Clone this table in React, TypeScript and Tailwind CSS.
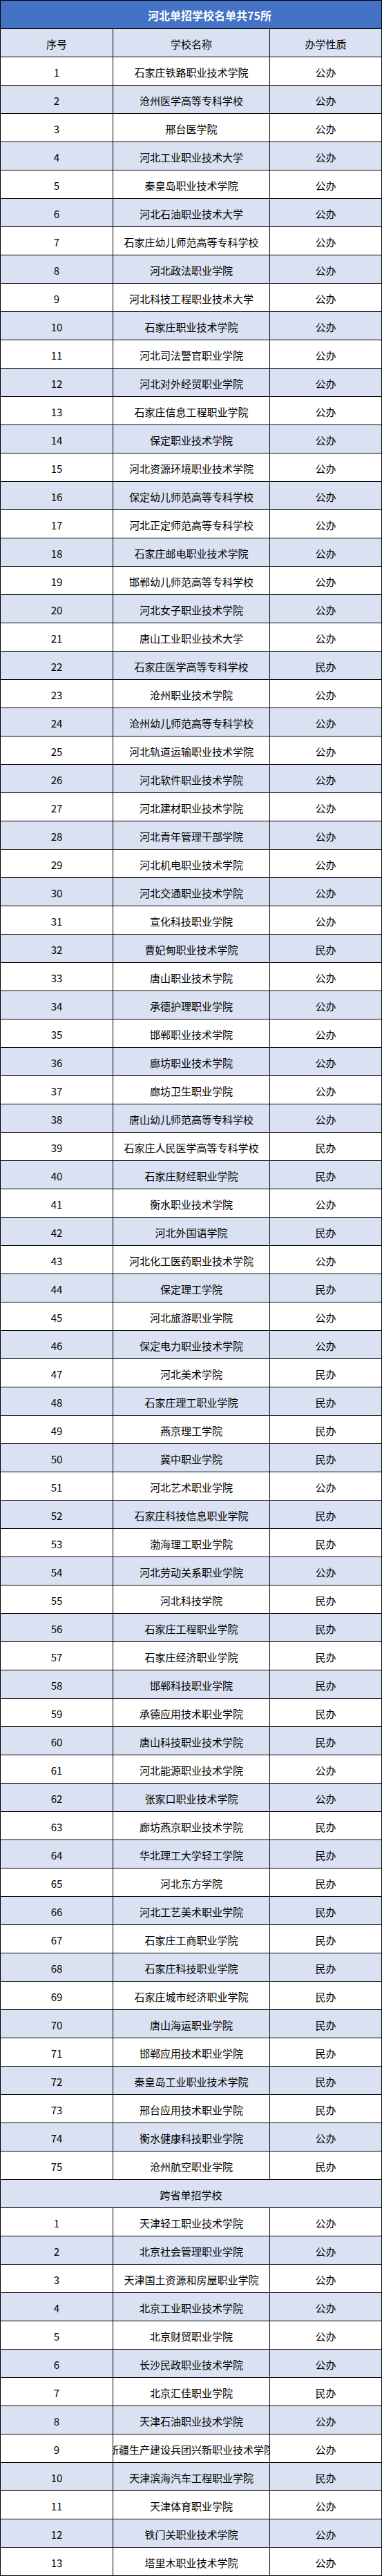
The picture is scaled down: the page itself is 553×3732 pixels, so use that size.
import React from "react";

const hebei: [string, string][] = [
  ["石家庄铁路职业技术学院", "公办"],
  ["沧州医学高等专科学校", "公办"],
  ["邢台医学院", "公办"],
  ["河北工业职业技术大学", "公办"],
  ["秦皇岛职业技术学院", "公办"],
  ["河北石油职业技术大学", "公办"],
  ["石家庄幼儿师范高等专科学校", "公办"],
  ["河北政法职业学院", "公办"],
  ["河北科技工程职业技术大学", "公办"],
  ["石家庄职业技术学院", "公办"],
  ["河北司法警官职业学院", "公办"],
  ["河北对外经贸职业学院", "公办"],
  ["石家庄信息工程职业学院", "公办"],
  ["保定职业技术学院", "公办"],
  ["河北资源环境职业技术学院", "公办"],
  ["保定幼儿师范高等专科学校", "公办"],
  ["河北正定师范高等专科学校", "公办"],
  ["石家庄邮电职业技术学院", "公办"],
  ["邯郸幼儿师范高等专科学校", "公办"],
  ["河北女子职业技术学院", "公办"],
  ["唐山工业职业技术大学", "公办"],
  ["石家庄医学高等专科学校", "民办"],
  ["沧州职业技术学院", "公办"],
  ["沧州幼儿师范高等专科学校", "公办"],
  ["河北轨道运输职业技术学院", "公办"],
  ["河北软件职业技术学院", "公办"],
  ["河北建材职业技术学院", "公办"],
  ["河北青年管理干部学院", "公办"],
  ["河北机电职业技术学院", "公办"],
  ["河北交通职业技术学院", "公办"],
  ["宣化科技职业学院", "公办"],
  ["曹妃甸职业技术学院", "民办"],
  ["唐山职业技术学院", "公办"],
  ["承德护理职业学院", "公办"],
  ["邯郸职业技术学院", "公办"],
  ["廊坊职业技术学院", "公办"],
  ["廊坊卫生职业学院", "公办"],
  ["唐山幼儿师范高等专科学校", "公办"],
  ["石家庄人民医学高等专科学校", "民办"],
  ["石家庄财经职业学院", "民办"],
  ["衡水职业技术学院", "公办"],
  ["河北外国语学院", "民办"],
  ["河北化工医药职业技术学院", "公办"],
  ["保定理工学院", "民办"],
  ["河北旅游职业学院", "公办"],
  ["保定电力职业技术学院", "公办"],
  ["河北美术学院", "民办"],
  ["石家庄理工职业学院", "民办"],
  ["燕京理工学院", "民办"],
  ["冀中职业学院", "民办"],
  ["河北艺术职业学院", "公办"],
  ["石家庄科技信息职业学院", "民办"],
  ["渤海理工职业学院", "民办"],
  ["河北劳动关系职业学院", "公办"],
  ["河北科技学院", "民办"],
  ["石家庄工程职业学院", "民办"],
  ["石家庄经济职业学院", "民办"],
  ["邯郸科技职业学院", "民办"],
  ["承德应用技术职业学院", "民办"],
  ["唐山科技职业技术学院", "民办"],
  ["河北能源职业技术学院", "公办"],
  ["张家口职业技术学院", "公办"],
  ["廊坊燕京职业技术学院", "民办"],
  ["华北理工大学轻工学院", "民办"],
  ["河北东方学院", "民办"],
  ["河北工艺美术职业学院", "民办"],
  ["石家庄工商职业学院", "民办"],
  ["石家庄科技职业学院", "民办"],
  ["石家庄城市经济职业学院", "民办"],
  ["唐山海运职业学院", "民办"],
  ["邯郸应用技术职业学院", "民办"],
  ["秦皇岛工业职业技术学院", "民办"],
  ["邢台应用技术职业学院", "民办"],
  ["衡水健康科技职业学院", "公办"],
  ["沧州航空职业学院", "民办"],
];

const other: [string, string][] = [
  ["天津轻工职业技术学院", "公办"],
  ["北京社会管理职业学院", "公办"],
  ["天津国土资源和房屋职业学院", "公办"],
  ["北京工业职业技术学院", "公办"],
  ["北京财贸职业学院", "公办"],
  ["长沙民政职业技术学院", "公办"],
  ["北京汇佳职业学院", "民办"],
  ["天津石油职业技术学院", "公办"],
  ["新疆生产建设兵团兴新职业技术学院", "公办"],
  ["天津滨海汽车工程职业学院", "民办"],
  ["天津体育职业学院", "公办"],
  ["铁门关职业技术学院", "公办"],
  ["塔里木职业技术学院", "公办"],
];

function Row({
  a,
  b,
  c,
  blue,
}: {
  a: string;
  b: string;
  c: string;
  blue: boolean;
}) {
  return (
    <div
      className={
        "flex h-[41px] border-b border-black " +
        (blue ? "bg-[#d9e1f2]" : "bg-white")
      }
    >
      <div className="flex w-[163px] shrink-0 items-center justify-center overflow-hidden whitespace-nowrap border-r border-black pt-[2px]">
        {a}
      </div>
      <div className="flex w-[227px] shrink-0 items-center justify-center overflow-hidden whitespace-nowrap border-r border-black pt-[2px]">
        {b}
      </div>
      <div className="flex flex-1 items-center justify-center overflow-hidden whitespace-nowrap pt-[2px]">
        {c}
      </div>
    </div>
  );
}

export default function App() {
  return (
    <div
      className="w-[553px] border-x border-t border-black text-[15px] leading-none text-black"
      style={{
        fontFamily:
          '"Noto Sans CJK SC", "Noto Sans", "Liberation Sans", sans-serif',
      }}
    >
      <div className="flex h-[41px] items-center justify-center border-b border-black bg-[#4472c4] pl-[54px] pt-[1px] text-[16px] font-bold text-white">
        河北单招学校名单共75所
      </div>
      <Row a="序号" b="学校名称" c="办学性质" blue={true} />
      {hebei.map(([name, kind], i) => (
        <Row
          key={"h" + i}
          a={String(i + 1)}
          b={name}
          c={kind}
          blue={i % 2 === 1}
        />
      ))}
      <div className="flex h-[41px] items-center justify-center border-b border-black bg-[#d9e1f2] pt-[2px]">
        跨省单招学校
      </div>
      {other.map(([name, kind], i) => (
        <Row
          key={"o" + i}
          a={String(i + 1)}
          b={name}
          c={kind}
          blue={i % 2 === 1}
        />
      ))}
    </div>
  );
}
